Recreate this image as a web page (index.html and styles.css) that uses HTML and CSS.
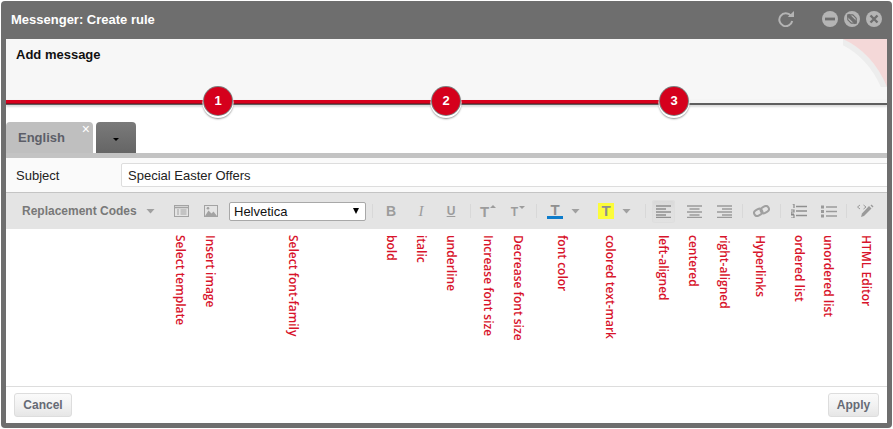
FILE: index.html
```html
<!DOCTYPE html>
<html lang="en">
<head>
<meta charset="utf-8">
<title>Messenger: Create rule</title>
<link rel="stylesheet" href="styles.css">
</head>
<body>
<div class="window">
  <div class="titlebar">
    <span class="title">Messenger: Create rule</span>
    <svg class="refresh" width="17" height="16" viewBox="0 0 17 16"><path d="M12.800 4.500A6.500 6.500 0 1 0 14.200 10" fill="none" stroke="#b4b4b4" stroke-width="2"/><path d="M9.800 6h6.200V0z" fill="#b4b4b4"/></svg>
    <svg class="winbtn" width="16" height="16" viewBox="0 0 16 16"><circle cx="8" cy="8" r="8" fill="#b4b4b4"/><rect x="3" y="6.600" width="10" height="2.800" fill="#6e6e6e"/></svg>
    <svg class="winbtn" width="16" height="16" viewBox="0 0 16 16"><circle cx="8" cy="8" r="8" fill="#b4b4b4"/><path d="M3.800 3.800h5l3.400 3.400v5h-5L3.800 8.800z" fill="none" stroke="#6e6e6e" stroke-width="1.200"/><path d="M4 4l8 8" stroke="#6e6e6e" stroke-width="3.200"/></svg>
    <svg class="winbtn" width="16" height="16" viewBox="0 0 16 16"><circle cx="8" cy="8" r="8" fill="#b4b4b4"/><path d="M4.500 4.500l7 7M11.500 4.500l-7 7" stroke="#6e6e6e" stroke-width="2.400"/></svg>
  </div>
  <div class="content">
    <div class="wizard">
      <svg class="corner" width="44" height="48" viewBox="0 0 44 48"><path d="M0 0Q30 14 44 48" fill="none" stroke="#ededed" stroke-width="6" transform="translate(-2 2)"/><path d="M0 0Q30 14 44 48V0z" fill="#f4d8d8"/></svg>
      <div class="wizard-title">Add message</div>
      <div class="progress"><div class="progress-done"></div></div>
      <span class="step step1">1</span>
      <span class="step step2">2</span>
      <span class="step step3">3</span>
    </div>
    <div class="tabs">
      <div class="tab">English<span class="tab-close">×</span></div>
      <div class="tab-more"><span class="tab-caret"></span></div>
    </div>
    <div class="subject">
      <label class="subject-label">Subject</label>
      <div class="subject-input">Special Easter Offers</div>
    </div>
    <div class="toolbar">
      <span class="codes">Replacement Codes</span><span class="caret"></span>
      <span class="btn b-template"><svg width="15" height="12" viewBox="0 0 15 12"><rect x=".5" y=".5" width="14" height="11" fill="none" stroke="#a3a3a3"/><path d="M.5 2.500h14" stroke="#a3a3a3" stroke-width="1.500"/><path d="M3 5h2M6.500 5h6M3 7h2M6.500 7h6M3 9h2M6.500 9h6" stroke="#a3a3a3"/></svg></span>
      <span class="btn"><svg width="14" height="12" viewBox="0 0 14 12"><rect x=".5" y=".5" width="13" height="11" fill="#e4e4e4" stroke="#a3a3a3"/><path d="M1 11l3.500-5.500 3 3 2-2 3.500 4.500z" fill="#a3a3a3"/><circle cx="4" cy="3.300" r="1.300" fill="#a3a3a3"/></svg></span>
      <div class="font-select"><span>Helvetica</span><span class="select-arrow"></span></div>
      <span class="sep s-font"></span>
      <span class="btn glyph bold">B</span>
      <span class="btn glyph ital">I</span>
      <span class="btn glyph under">U</span>
      <span class="sep s-style"></span>
      <span class="btn glyph sized">T<span class="up"></span></span>
      <span class="btn glyph sized small">T<span class="down"></span></span>
      <span class="sep s-size"></span>
      <span class="colorbtn"><span class="t-color">T</span></span><span class="caret caret-after"></span>
      <span class="colorbtn mark-btn"><span class="t-mark">T</span></span><span class="caret caret-after"></span>
      <span class="sep s-mark"></span>
      <span class="btn active"><svg width="15" height="13" viewBox="0 0 15 13"><path d="M0 1h15M0 4h10M0 7h15M0 10h10M0 12.500h15" stroke="#8f8f8f" stroke-width="1.300"/></svg></span>
      <span class="btn b-center"><svg width="15" height="13" viewBox="0 0 15 13"><path d="M0 1h15M2.500 4h10M0 7h15M2.500 10h10M0 12.500h15" stroke="#9a9a9a" stroke-width="1.300"/></svg></span>
      <span class="btn"><svg width="15" height="13" viewBox="0 0 15 13"><path d="M0 1h15M5 4h10M0 7h15M5 10h10M0 12.500h15" stroke="#9a9a9a" stroke-width="1.300"/></svg></span>
      <span class="sep s-align"></span>
      <span class="btn b-link"><svg width="17" height="12" viewBox="0 0 17 12"><g fill="none" stroke="#a0a0a0" stroke-width="2"><rect x="1" y="4.500" width="8.500" height="6" rx="3" transform="rotate(-30 5 7.500)"/><rect x="7.500" y="1.500" width="8.500" height="6" rx="3" transform="rotate(-30 12 4.500)"/></g></svg></span>
      <span class="sep s-link"></span>
      <span class="btn b-ol"><svg width="16" height="14" viewBox="0 0 16 14"><path d="M5 2.500h11M5 7h11M5 11.500h11" stroke="#8f8f8f" stroke-width="1.600"/><path d="M1.500 0h1.500v4M0 6h3v2H0v2h3M0 11h3v3H0" fill="none" stroke="#8a8a8a" stroke-width="1.200"/></svg></span>
      <span class="btn b-ul"><svg width="16" height="13" viewBox="0 0 16 13"><path d="M5 2h11M5 6.500h11M5 11h11" stroke="#9a9a9a" stroke-width="1.600"/><path d="M0 .5h3v3H0zM0 5h3v3H0zM0 9.500h3v3H0z" fill="#9a9a9a"/></svg></span>
      <span class="sep s-list"></span>
      <span class="btn b-html"><svg width="17" height="14" viewBox="0 0 17 14"><path d="M3 1L0.500 3 3 5M6.500 1L9 3 6.500 5" fill="none" stroke="#9a9a9a"/><path d="M4 13l1-3.500 7-7.500 2.500 2.500-7.500 7.500z" fill="#9a9a9a"/><path d="M13.500 1.500l1-1 2 2-1 1z" fill="#9a9a9a"/></svg></span>
    </div>
    <div class="editor">
      <span class="note n1">Select template</span>
      <span class="note n2">Insert image</span>
      <span class="note n3">Select font-family</span>
      <span class="note n4">bold</span>
      <span class="note n5">italic</span>
      <span class="note n6">underline</span>
      <span class="note n7">Increase font size</span>
      <span class="note n8">Decrease font size</span>
      <span class="note n9">font color</span>
      <span class="note n10">colored text-mark</span>
      <span class="note n11">left-aligned</span>
      <span class="note n12">centered</span>
      <span class="note n13">right-aligned</span>
      <span class="note n14">Hyperlinks</span>
      <span class="note n15">ordered list</span>
      <span class="note n16">unordered list</span>
      <span class="note n17">HTML Editor</span>
    </div>
    <div class="footer">
      <button class="action cancel">Cancel</button>
      <button class="action apply">Apply</button>
    </div>
  </div>
</div>
</body>
</html>
```

FILE: styles.css
```css
* { box-sizing: border-box; }
html, body { margin: 0; padding: 0; background: #fff; overflow: hidden; }
body { font-family: "Liberation Sans", Arial, sans-serif; width: 893px; height: 429px; padding: 1px; }
.window { width: 891px; height: 427px; background: #6e6e6e; border-radius: 4px; padding: 0 5px 5px; display: flex; flex-direction: column; }
.titlebar { height: 38px; flex: none; display: flex; align-items: center; padding: 0 0 2px 5px; }
.title { color: #fff; font-weight: 700; font-size: 13px; flex: 1; }
.refresh { margin-right: 27px; }
.winbtn { margin-right: 6px; }
.winbtn:last-child { margin-right: 5px; }
.content { flex: 1; background: #fff; display: flex; flex-direction: column; overflow: hidden; width: 881px; }
.wizard { height: 66px; flex: none; position: relative; background: #f7f7f7; }
.corner { position: absolute; top: 0; right: 0; }
.wizard-title { padding: 8px 0 0 10px; font-size: 13px; font-weight: 700; color: #111; }
.progress { position: absolute; left: 0; right: 0; bottom: 0; height: 6px; background: #f5f5f5; border-bottom: 2px solid #5f5f5f; box-shadow: 0 2px 2px #ddd; }
.progress-done { width: 660px; height: 4px; margin-top: 1px; background: #d8001c; border-bottom: 1px solid #8a1020; }
.step { position: absolute; top: 48px; width: 28px; height: 28px; border-radius: 50%; background: #d5001c; color: #fff; font-size: 13px; font-weight: 700; text-align: center; line-height: 28px; box-shadow: 0 0 0 1px #7c7c7c, 0 1.500px 0 1.500px #fff, 0 3px 2px 1px #8a8a8a; }
.step1 { left: 198px; }
.step2 { left: 426px; }
.step3 { left: 654px; }
.tabs { height: 53px; flex: none; border-bottom: 5px solid #c3c3c3; display: flex; align-items: flex-end; gap: 3px; }
.tab { position: relative; width: 87px; height: 31px; background: #bfbfbf; border-radius: 4px 4px 0 0; color: #5c5e68; font-size: 13px; font-weight: 700; padding: 8px 0 0 12px; }
.tab-close { position: absolute; top: 0; right: 3px; color: #fff; font-size: 14px; font-weight: 400; line-height: 14px; }
.tab-more { width: 40px; height: 31px; background: linear-gradient(#7a7a7a, #656565); border-radius: 4px 4px 0 0; display: flex; justify-content: center; padding-top: 16px; }
.tab-caret { width: 0; height: 0; border: 3px solid transparent; border-top: 3px solid #000; border-bottom: 0; }
.subject { height: 35px; flex: none; background: #fafafa; border-bottom: 1px solid #c4c4c4; display: flex; align-items: center; padding-left: 10px; }
.subject-label { flex: none; width: 105px; font-size: 13px; color: #222; }
.subject-input { flex: none; width: 790px; height: 24px; background: #fff; border: 1px solid #ddd; border-radius: 2px; font-size: 13px; color: #222; padding: 4px 0 0 6px; }
.toolbar { height: 36px; flex: none; background: #e4e4e4; display: flex; align-items: center; }
.codes { flex: none; font-size: 12px; font-weight: 700; color: #787878; margin-left: 16px; width: 124px; }
.caret { width: 9px; height: 5px; flex: none; background: #a0a0a0; clip-path: polygon(0 0, 100% 0, 50% 100%); }
.caret-after { margin-left: 8px; }
.btn { width: 30px; height: 22px; flex: none; display: flex; align-items: center; justify-content: center; position: relative; }
.b-template { margin-left: 11px; }
.font-select { width: 137px; height: 19px; margin-left: 3px; flex: none; background: #fff; border: 1px solid #a8a8a8; border-radius: 2px; font-size: 13px; color: #111; display: flex; align-items: center; justify-content: space-between; padding: 0 6px 0 4px; }
.select-arrow { width: 0; height: 0; border: 3px solid transparent; border-top: 6px solid #000; border-bottom: 0; }
.sep { width: 1px; height: 14px; background: #d8d8d8; flex: none; }
.s-font { margin: 0 3px 0 6px; }
.s-style { margin: 0 2px 0 4px; }
.s-size { margin: 0 10px 0 3px; }
.s-mark { margin: 0 6px 0 14px; }
.s-align { margin: 0 0 0 3px; }
.s-link { margin: 0 0 0 1px; }
.s-list { margin: 0 0 0 5px; }
.glyph { font-size: 14px; color: #9c9c9c; font-weight: 700; }
.ital { font-family: "Liberation Serif", serif; font-style: italic; font-weight: 400; font-size: 15px; }
.under { text-decoration: underline; font-size: 12px; }
.sized { font-size: 15px; }
.small { font-size: 12px; padding-top: 2px; }
.up, .down { width: 0; height: 0; border: 3px solid transparent; margin-left: 1px; align-self: flex-start; }
.up { border-bottom: 3px solid #9c9c9c; border-top: 0; margin-top: 5px; }
.down { border-top: 3px solid #9c9c9c; border-bottom: 0; margin-top: 4px; }
.colorbtn { flex: none; width: 16px; height: 16px; display: flex; justify-content: center; font-weight: 700; color: #8f8f8f; font-size: 15px; line-height: 15px; }
.t-color { width: 16px; text-align: center; border-bottom: 3px solid #0d7ccb; height: 17px; margin-top: -1px; }
.mark-btn { margin-left: 18px; background: #fcfc3a; }
.active { height: 23px; width: 23px; background: linear-gradient(#d8d8d8, #e0e0e0 40%, #e2e2e2); border-radius: 3px; box-shadow: inset 0 0 0 1px #dedede; }
.b-center { margin-left: 4px; }
.b-link { width: 36px; }
.b-ol { width: 35px; }
.b-ul { width: 25px; }
.b-html { width: 36px; }
.editor { flex: 1; position: relative; background: #fff; }
.note { position: absolute; top: 6px; writing-mode: vertical-rl; font-family: "Open Sans", sans-serif; font-size: 12px; font-weight: 600; line-height: 14px; color: #d8142c; white-space: nowrap; }
.n1 { left: 167px; }
.n2 { left: 197px; }
.n3 { left: 280px; }
.n4 { left: 378px; }
.n5 { left: 408px; }
.n6 { left: 438px; }
.n7 { left: 475px; }
.n8 { left: 505px; }
.n9 { left: 549px; }
.n10 { left: 597px; }
.n11 { left: 650px; }
.n12 { left: 680px; }
.n13 { left: 711px; }
.n14 { left: 747px; }
.n15 { left: 786px; }
.n16 { left: 815px; }
.n17 { left: 853px; }
.footer { height: 37px; flex: none; border-top: 1px solid #ddd; display: flex; justify-content: space-between; align-items: flex-start; padding: 6px 8px 0; background: #fff; }
.action { height: 24px; background: linear-gradient(#fafafa, #f2f2f2 50%, #e6e6e6); border: 1px solid #ddd; border-radius: 3px; font-family: "Liberation Sans", Arial, sans-serif; font-size: 12px; font-weight: 700; color: #666a75; padding: 0; }
.cancel { width: 58px; }
.apply { width: 51px; }
```
